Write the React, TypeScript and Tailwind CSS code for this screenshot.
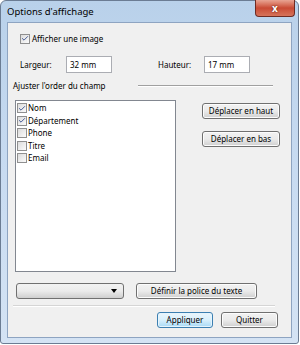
import { Check } from 'lucide-react';

const font = "font-['Segoe_UI','Noto_Sans',sans-serif]";

function Box({ checked }: { checked?: boolean }) {
    return (
        <span className="w-[10px] h-[10px] border border-[#8f8f8f] bg-gradient-to-br from-[#dcdcdc] to-[#fbfbfb] flex items-center justify-center shrink-0">
            {checked && <Check size={9} strokeWidth={3} className="text-[#4a5f97]" />}
        </span>
    );
}

function Btn({ label, w, primary }: { label: string; w: string; primary?: boolean }) {
    return (
        <div
            className={`${w} h-[16px] rounded-[3px] border flex items-center justify-center text-[8px] text-black leading-none whitespace-nowrap ${
                primary
                    ? 'border-[#3c7fb1] bg-gradient-to-b from-[#eaf6fd] via-[#d9f0fc] to-[#a7d9f5] shadow-[inset_0_0_0_1px_#e6f4fc]'
                    : 'border-[#707070] bg-gradient-to-b from-[#f2f2f2] via-[#ebebeb] to-[#cfcfcf] shadow-[inset_0_0_0_1px_#fcfcfc]'
            }`}
        >
            {label}
        </div>
    );
}

const items = [
    { name: 'Nom', checked: true },
    { name: 'Département', checked: true },
    { name: 'Phone', checked: false },
    { name: 'Titre', checked: false },
    { name: 'Email', checked: false },
];

export default function App() {
    return (
        <div className={`w-[300px] h-[345px] bg-white ${font}`}>
            <div className="w-[299px] h-[344px] rounded-t-[6px] rounded-b-[3px] border border-[#6b7c93] bg-gradient-to-b from-[#b9d1ea] via-[#c8dbf1] to-[#d4e3f4] flex flex-col px-[6px] pb-[5px]">
                {/* Title bar */}
                <div className="h-[21px] flex items-start justify-between shrink-0">
                    <span className="text-[9.5px] leading-none text-black mt-[6px] whitespace-nowrap">Options d'affichage</span>
                    <div className="w-[40px] h-[17px] -mt-[1px] -mr-[3px] rounded-b-[4px] border border-t-0 border-[#6e2b22] bg-gradient-to-b from-[#e8a493] via-[#c94a34] to-[#d6735a] flex items-center justify-center">
                        <span className="text-white font-bold text-[10px] leading-none [text-shadow:0_0_2px_#4a120a]">x</span>
                    </div>
                </div>

                {/* Client area */}
                <div className="flex-1 border border-[#8ea4c1] bg-[#f0f0f0] text-[8px] leading-none text-black flex flex-col whitespace-nowrap">
                    <label className="h-[11px] flex items-center gap-[2px] mt-[10px] ml-[12px]">
                        <Box checked />
                        <span>Afficher une image</span>
                    </label>

                    <div className="h-[17px] flex items-center mt-[12px] ml-[12px]">
                        <span className="w-[46px]">Largeur:</span>
                        <div className="w-[46px] h-[17px] border border-[#abadb3] bg-white flex items-center pl-[3px]">32 mm</div>
                        <span className="ml-[46px] w-[46px]">Hauteur:</span>
                        <div className="w-[46px] h-[17px] border border-[#abadb3] bg-white flex items-center pl-[3px]">17 mm</div>
                    </div>

                    <div className="h-[11px] flex items-center mt-[7px] ml-[5px]">
                        <span className="w-[125px]">Ajuster l'order du champ</span>
                        <div className="w-[135px] h-[2px] border-t border-[#a0a0a0] border-b border-b-white" />
                    </div>

                    <div className="flex mt-[9px] ml-[7px]">
                        <div className="w-[161px] h-[172px] border border-[#828790] bg-white flex flex-col pt-[1px] pl-[1px]">
                            {items.map(it => (
                                <div key={it.name} className="h-[12.5px] flex items-center gap-[1px]">
                                    <Box checked={it.checked} />
                                    <span>{it.name}</span>
                                </div>
                            ))}
                        </div>
                        <div className="flex flex-col ml-[26px] mt-[3px] gap-[12px]">
                            <Btn label="Déplacer en haut" w="w-[78px]" />
                            <Btn label="Déplacer en bas" w="w-[78px]" />
                        </div>
                    </div>

                    <div className="h-[16px] flex items-center mt-[11px] ml-[8px]">
                        <div className="w-[108px] h-[16px] rounded-[3px] border border-[#707070] bg-gradient-to-b from-[#f2f2f2] via-[#ebebeb] to-[#cfcfcf] flex items-center justify-end pr-[6px]">
                            <span className="w-0 h-0 border-l-[3px] border-r-[3px] border-t-[4px] border-l-transparent border-r-transparent border-t-black" />
                        </div>
                        <div className="ml-[12px]">
                            <Btn label="Définir la police du texte" w="w-[121px]" />
                        </div>
                    </div>

                    <div className="mt-[6px] ml-[5px] w-[262px] h-[2px] border-t border-[#d5d5d5] border-b border-b-white" />

                    <div className="flex mt-[5px] ml-[149px] gap-[8px]">
                        <Btn label="Appliquer" w="w-[56px]" primary />
                        <Btn label="Quitter" w="w-[57px]" />
                    </div>
                </div>
            </div>
        </div>
    );
}
